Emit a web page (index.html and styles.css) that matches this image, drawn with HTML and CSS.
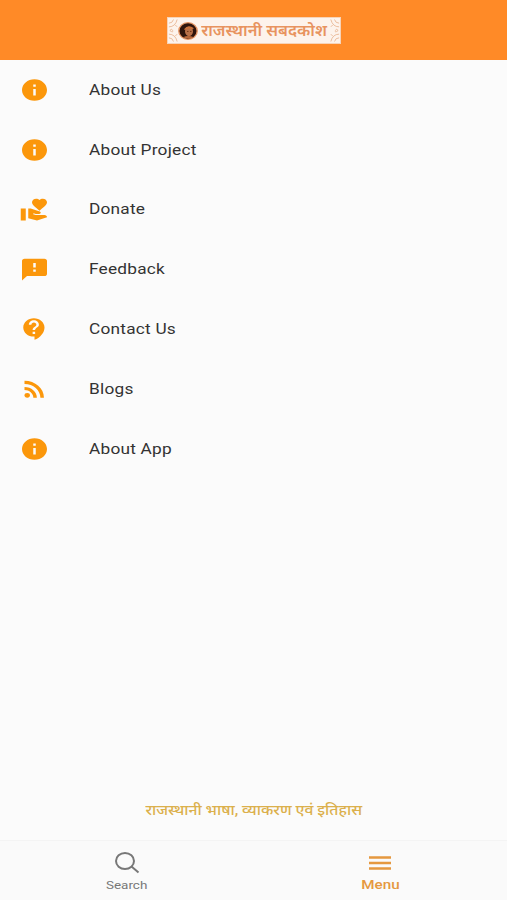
FILE: index.html
```html
<!DOCTYPE html>
<html lang="en">
<head>
    <meta charset="UTF-8">
    <meta name="viewport" content="width=device-width, initial-scale=1.0">
    <link rel="stylesheet" href="styles.css">
    <title>राजस्थानी सबदकोश</title>
</head>
<body>

    <header class="header">
        <div class="banner">
            <svg class="corner" viewBox="0 0 12 26">
                <path d="M1 9q7 0 9-8M1 5q4 0 5-4M1 17q7 0 9 8M1 21q4 0 5 4M2 13q2-3 3 0t-3 0M8 7l2 2M8 19l2-2"/>
            </svg>
            <svg class="portrait" viewBox="0 0 20 20" preserveAspectRatio="none">
                <circle cx="10" cy="10" r="9.2" fill="#2e140c" stroke="#e59462" stroke-width="1.4"/>
                <ellipse cx="11" cy="10.5" rx="4" ry="5.3" fill="#b87048"/>
                <path d="M6 8q4-6 10-1l-2 1q-4-2-7 1z" fill="#c9713b"/>
                <path d="M9 10.500h1.500M12 10.500h1.500" stroke="#6b3418" fill="none"/>
                <path d="M5 17q5-3 11 0-5 3-11 0z" fill="#b8683c"/>
            </svg>
            <span class="banner-text"><span class="banner-label">राजस्थानी सबदकोश</span></span>
            <svg class="corner corner-right" viewBox="0 0 12 26">
                <path d="M1 9q7 0 9-8M1 5q4 0 5-4M1 17q7 0 9 8M1 21q4 0 5 4M2 13q2-3 3 0t-3 0M8 7l2 2M8 19l2-2"/>
            </svg>
        </div>
    </header>

    <main class="menu">
        <div class="item">
            <svg class="icon" viewBox="-0.4 0 24 24" preserveAspectRatio="none"><path d="M12 2C6.480 2 2 6.480 2 12s4.480 10 10 10 10-4.480 10-10S17.520 2 12 2zm1 15h-2v-6h2v6zm0-8h-2V7h2v2z"/></svg>
            <span class="label">About Us</span>
        </div>
        <div class="item">
            <svg class="icon" viewBox="-0.4 0 24 24" preserveAspectRatio="none"><path d="M12 2C6.480 2 2 6.480 2 12s4.480 10 10 10 10-4.480 10-10S17.520 2 12 2zm1 15h-2v-6h2v6zm0-8h-2V7h2v2z"/></svg>
            <span class="label">About Project</span>
        </div>
        <div class="item">
            <svg class="icon" viewBox="-0.4 -0.5 24 24" preserveAspectRatio="none"><path d="M1 11h4v11H1zM16 3.250C16.650 2.490 17.660 2 18.700 2 20.550 2 22 3.450 22 5.300c0 2.270-2.910 4.900-6 7.700-3.090-2.810-6-5.440-6-7.700C10 3.450 11.450 2 13.300 2c1.040 0 2.050.49 2.700 1.250zM20 17h-7l-2.090-.73.33-.94L13 16h2.820c.65 0 1.180-.53 1.180-1.180 0-.49-.31-.93-.77-1.110L8.970 11H7v9.020L14 22l8.010-3c-.01-1.100-.9-2-2.010-2z"/></svg>
            <span class="label">Donate</span>
        </div>
        <div class="item">
            <svg class="icon" viewBox="-0.4 -0.5 24 24" preserveAspectRatio="none"><path d="M20 2H4c-1.100 0-1.990.9-1.990 2L2 22l4-4h14c1.100 0 2-.9 2-2V4c0-1.100-.9-2-2-2zm-7 12h-2v-2h2v2zm0-4h-2V6h2v4z"/></svg>
            <span class="label">Feedback</span>
        </div>
        <div class="item">
            <svg class="icon" viewBox="-0.4 0 24 24" preserveAspectRatio="none"><path d="M11.500 2C6.810 2 3 5.810 3 10.500S6.810 19 11.500 19h.5v3c4.860-2.340 8-7 8-11.500C20 5.810 16.190 2 11.500 2zm1 14.500h-2v-2h2v2zm0-3.500h-2c0-3.250 3-3 3-5 0-1.100-.9-2-2-2s-2 .9-2 2h-2c0-2.210 1.790-4 4-4s4 1.790 4 4c0 2.500-3 2.750-3 5z"/></svg>
            <span class="label">Contact Us</span>
        </div>
        <div class="item">
            <svg class="icon" viewBox="-0.4 0 24 24" preserveAspectRatio="none"><circle cx="6.180" cy="17.820" r="2.180"/><path d="M4 4.440v2.830c7.030 0 12.730 5.700 12.730 12.730h2.830c0-8.590-6.970-15.560-15.560-15.560zm0 5.660v2.830c3.900 0 7.070 3.170 7.070 7.070h2.830c0-5.470-4.430-9.900-9.900-9.900z"/></svg>
            <span class="label">Blogs</span>
        </div>
        <div class="item">
            <svg class="icon" viewBox="-0.4 0 24 24" preserveAspectRatio="none"><path d="M12 2C6.480 2 2 6.480 2 12s4.480 10 10 10 10-4.480 10-10S17.520 2 12 2zm1 15h-2v-6h2v6zm0-8h-2V7h2v2z"/></svg>
            <span class="label">About App</span>
        </div>
    </main>

    <div class="tagline"><span class="tagline-text">राजस्थानी भाषा, व्याकरण एवं इतिहास</span></div>

    <nav class="tabs">
        <div class="tab">
            <svg class="tab-icon" viewBox="0 0 26 24"><ellipse cx="11" cy="10" rx="9" ry="8"/><path d="M17.500 15.500l7 6"/></svg>
            <span class="tab-label">Search</span>
        </div>
        <div class="tab active">
            <svg class="tab-icon" viewBox="0 0 26 24"><path d="M2 6.500h22M2 12h22M2 17.500h22"/></svg>
            <span class="tab-label">Menu</span>
        </div>
    </nav>

</body>
</html>
```
FILE: styles.css
```css
* {
    box-sizing: border-box;
}

body {
    margin: 0;
    height: 900px;
    display: flex;
    flex-direction: column;
    background-color: #fbfbfb;
    font-family: Roboto, "Noto Sans", sans-serif;
    overflow: hidden;
}

.header {
    height: 60px;
    flex: none;
    background-color: #ff8a27;
    display: flex;
    justify-content: center;
    padding-top: 17px;
}

.banner {
    width: 174px;
    height: 27px;
    background-color: #fdf3ec;
    border: 1px solid #f7d3b8;
    display: flex;
    align-items: center;
}

.corner {
    width: 11px;
    height: 25px;
    flex: none;
    fill: none;
    stroke: #e9b896;
    stroke-width: 1;
}

.corner-right {
    transform: scaleX(-1);
}

.portrait {
    width: 20px;
    height: 18px;
    flex: none;
    margin-left: -1px;
    margin-right: 2px;
}

.banner-text {
    flex: 1;
    display: flex;
    justify-content: center;
    white-space: nowrap;
}

.banner-label {
    font-size: 16px;
    line-height: 23px;
    font-weight: 600;
    color: #e8935f;
    transform: scaleX(1.03);
}

.menu {
    flex: 1;
}

.item {
    height: 59.8px;
    display: flex;
    align-items: center;
    padding-left: 19px;
}

.icon {
    width: 30px;
    height: 26px;
    margin-right: 39.5px;
    fill: #fb970b;
}

/* wide lettering */
.label {
    font-size: 15px;
    line-height: 20px;
    letter-spacing: 0.2px;
    color: #333;
    transform: scaleX(1.15);
    transform-origin: left;
}

.tagline {
    height: 62px;
    display: flex;
    justify-content: center;
    white-space: nowrap;
}

.tagline-text {
    font-size: 14px;
    line-height: 64px;
    font-weight: 500;
    color: #dbb04c;
    transform: scaleX(1.12);
}

.tabs {
    height: 60px;
    flex: none;
    display: flex;
    background-color: #fafafa;
    border-top: 1px solid #f4f4f4;
}

.tab {
    flex: 1;
    display: flex;
    flex-direction: column;
    align-items: center;
    padding-top: 10px;
    color: #777;
}

.tab-icon {
    width: 26px;
    height: 24px;
    fill: none;
    stroke: currentColor;
    stroke-width: 2;
}

.tab-label {
    font-size: 11.5px;
    line-height: 20px;
    transform: scaleX(1.17);
}

.active {
    color: #e5983f;
}

.active .tab-icon {
    stroke-width: 2.4;
}

.active .tab-label {
    font-size: 13px;
    font-weight: 500;
}
```
